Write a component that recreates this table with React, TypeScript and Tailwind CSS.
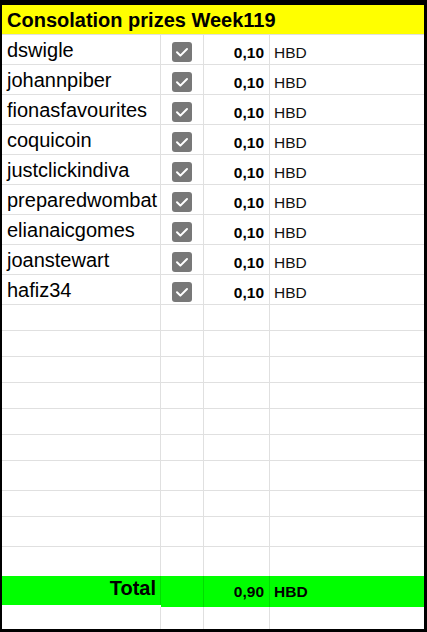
import * as React from "react";

const winners = [
  "dswigle",
  "johannpiber",
  "fionasfavourites",
  "coquicoin",
  "justclickindiva",
  "preparedwombat",
  "elianaicgomes",
  "joanstewart",
  "hafiz34",
];

// heights of the empty sheet rows under the list (border included)
const emptyRows = [26, 26, 26, 26, 26, 26, 30, 26, 30, 29];

const cols = "grid grid-cols-[159px_43px_66px_154px]";
const line = "border-[#e0e0e0]";

function CheckBox() {
  return (
    <span className="flex h-[20px] w-[20px] items-center justify-center rounded-[3px] bg-[#787878]">
      <svg width="20" height="20" viewBox="0 0 20 20" fill="none">
        <path
          d="M5 10.2l3.4 3.4L15 7"
          stroke="#fff"
          strokeWidth="2"
          strokeLinecap="round"
          strokeLinejoin="round"
        />
      </svg>
    </span>
  );
}

function WinnerRow({ name }: { name: string }) {
  return (
    <div className={`${cols} h-[30px] border-b ${line}`}>
      <div className={`flex items-end border-r ${line} pb-[3px] pl-[5px] text-[20px] text-black`}>
        {name}
      </div>
      <div className={`flex items-center justify-center border-r ${line}`}>
        <CheckBox />
      </div>
      <div className={`flex items-end justify-end border-r ${line} pb-[4px] pr-[5px] text-[15.5px] font-bold text-black`}>
        0,10
      </div>
      <div className="flex items-end pb-[4px] pl-[4px] text-[15.5px] text-[#111]">HBD</div>
    </div>
  );
}

function EmptyRow({ h, last }: { h: number; last?: boolean }) {
  return (
    <div
      className={`${cols} ${last ? "" : `border-b ${line}`}`}
      style={{ height: h }}>
      <div className={`border-r ${line}`} />
      <div className={`border-r ${line}`} />
      <div className={`border-r ${line}`} />
      <div />
    </div>
  );
}

export default function App() {
  return (
    <div
      className="h-[632px] w-[427px] bg-black pb-[3px] pl-[2px] pr-[3px] pt-[5px]"
      style={{ fontFamily: '"Liberation Sans", Arial, sans-serif' }}>
      <div className="flex h-full flex-col bg-white">
        <div className={`flex h-[30px] items-start border-b ${line}`}>
          <div className="flex h-[29px] w-full items-center bg-[#ffff00] pl-[5px] text-[20px] font-bold text-black">
            Consolation prizes Week119
          </div>
        </div>

        {winners.map((w) => (
          <WinnerRow key={w} name={w} />
        ))}

        {emptyRows.map((h, i) => (
          <EmptyRow key={i} h={h} last={i === emptyRows.length - 1} />
        ))}

        <div className={`${cols} h-[31px] items-start`}>
          <div className="flex h-[29px] items-end justify-end border-r border-[#00dd00] bg-[#00ff00] pb-[2px] pr-[4px] text-[20px] font-bold text-black">
            Total
          </div>
          <div className="h-full border-r border-[#00dd00] bg-[#00ff00]" />
          <div className="flex h-full items-end justify-end border-r border-[#00dd00] bg-[#00ff00] pb-[4px] pr-[5px] text-[15.5px] font-bold text-black">
            0,90
          </div>
          <div className="flex h-full items-end bg-[#00ff00] pb-[4px] pl-[4px] text-[15.5px] font-bold text-black">
            HBD
          </div>
        </div>

        <div className={`${cols} flex-1`}>
          <div className={`border-r ${line}`} />
          <div className={`border-r ${line}`} />
          <div className={`border-r ${line}`} />
          <div />
        </div>
      </div>
    </div>
  );
}
